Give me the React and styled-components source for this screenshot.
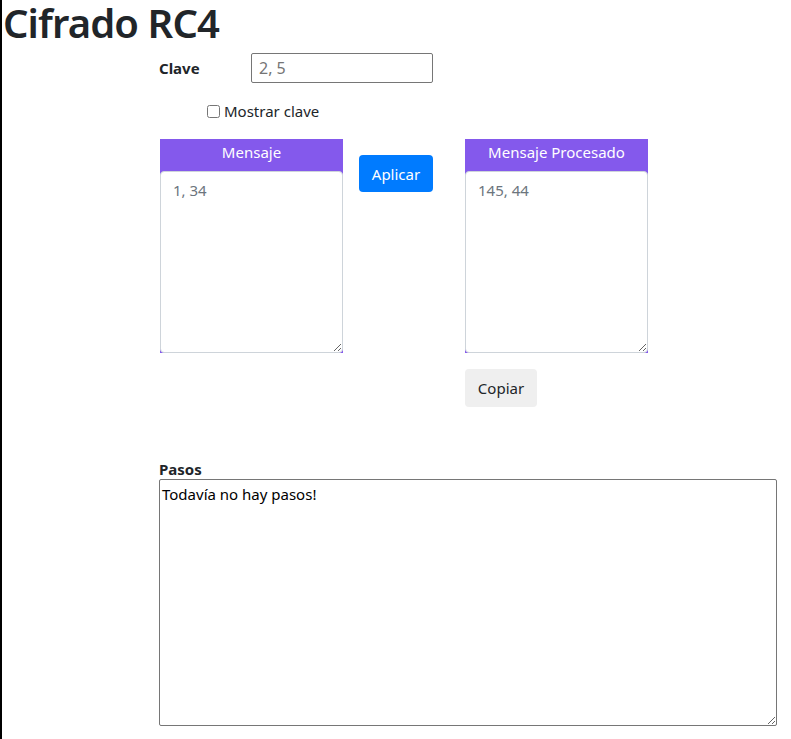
import React from "react";
import styled, { createGlobalStyle } from "styled-components";

const Global = createGlobalStyle`
  html, body { margin: 0; padding: 0; background: #fff; }
  body {
    font-family: "Noto Sans", "Open Sans", sans-serif;
    font-size: 16px;
    color: #212529;
    border-left: 2px solid #000;
    min-height: 739px;
    box-sizing: border-box;
  }
  * { box-sizing: border-box; }
`;

const Title = styled.h1`
  margin: 0;
  padding-left: 1px;
  font-size: 40px;
  font-weight: 600;
  line-height: 46px;
  letter-spacing: -0.9px;
  color: #212529;
`;

const Main = styled.main`
  padding-left: 157px;
  display: flex;
  flex-direction: column;
`;

const KeyRow = styled.div`
  display: flex;
  align-items: center;
  margin-top: 7px;
  height: 30px;
`;

const Label = styled.label`
  font-weight: 700;
  font-size: 15px;
  width: 92px;
`;

const KeyInput = styled.input`
  width: 182px;
  height: 30px;
  border: 1px solid #767676;
  border-radius: 2px;
  padding: 0 7px;
  font-family: inherit;
  font-size: 16px;
  &::placeholder { color: #757575; }
`;

const CheckRow = styled.label`
  display: flex;
  align-items: center;
  gap: 4px;
  margin-top: 18px;
  margin-left: 48px;
  font-size: 15px;
  line-height: 20px;
`;

const Check = styled.input`
  margin: 0;
  width: 13px;
  height: 13px;
`;

const Workspace = styled.div`
  display: flex;
  align-items: flex-start;
  margin-top: 18px;
  margin-left: 1px;
`;

const Panel = styled.div`
  display: flex;
  flex-direction: column;
  gap: 16px;
  width: 183px;
`;

const Card = styled.div`
  background: #8459ec;
  display: flex;
  flex-direction: column;
  width: 183px;
`;

const CardHead = styled.div`
  color: #fff;
  text-align: center;
  height: 32px;
  line-height: 26px;
  font-size: 15px;
`;

const CardArea = styled.textarea`
  display: block;
  width: 183px;
  height: 182px;
  border: 1px solid #ced4da;
  border-radius: 4px;
  padding: 8px 12px;
  font-family: inherit;
  font-size: 15px;
  background: #fff;
  resize: vertical;
  &::placeholder { color: #6c757d; }
`;

const ButtonCol = styled.div`
  width: 122px;
  padding: 16px 0 0 16px;
`;

const Button = styled.button`
  display: block;
  font-family: inherit;
  font-size: 15px;
  border-radius: 4px;
  border: none;
  height: ${(p) => p.$h}px;
  padding: 0;
  cursor: pointer;
  color: ${(p) => (p.$variant === "primary" ? "#fff" : "#212529")};
  background: ${(p) => (p.$variant === "primary" ? "#007bff" : "#efefef")};
  width: ${(p) => p.$w}px;
`;

const Steps = styled.section`
  margin-top: 53px;
  display: flex;
  flex-direction: column;
`;

const StepsLabel = styled.label`
  font-weight: 700;
  font-size: 15px;
  line-height: 18px;
`;

const StepsArea = styled.textarea`
  width: 618px;
  height: 247px;
  margin-top: 1px;
  border: 1px solid #767676;
  border-radius: 2px;
  padding: 4px 2px;
  font-family: inherit;
  font-size: 15px;
  color: #000;
  resize: both;
`;

export default function App() {
  return (
    <>
      <Global />
      <Title>Cifrado RC4</Title>
      <Main>
        <KeyRow>
          <Label>Clave</Label>
          <KeyInput placeholder="2, 5" />
        </KeyRow>
        <CheckRow>
          <Check type="checkbox" />
          Mostrar clave
        </CheckRow>
        <Workspace>
          <Panel>
            <Card>
              <CardHead>Mensaje</CardHead>
              <CardArea placeholder="1, 34" />
            </Card>
          </Panel>
          <ButtonCol>
            <Button $variant="primary" $w={74} $h={37}>Aplicar</Button>
          </ButtonCol>
          <Panel>
            <Card>
              <CardHead>Mensaje Procesado</CardHead>
              <CardArea placeholder="145, 44" />
            </Card>
            <Button $w={72} $h={38}>Copiar</Button>
          </Panel>
        </Workspace>
        <Steps>
          <StepsLabel>Pasos</StepsLabel>
          <StepsArea defaultValue="Todavía no hay pasos!" />
        </Steps>
      </Main>
    </>
  );
}
